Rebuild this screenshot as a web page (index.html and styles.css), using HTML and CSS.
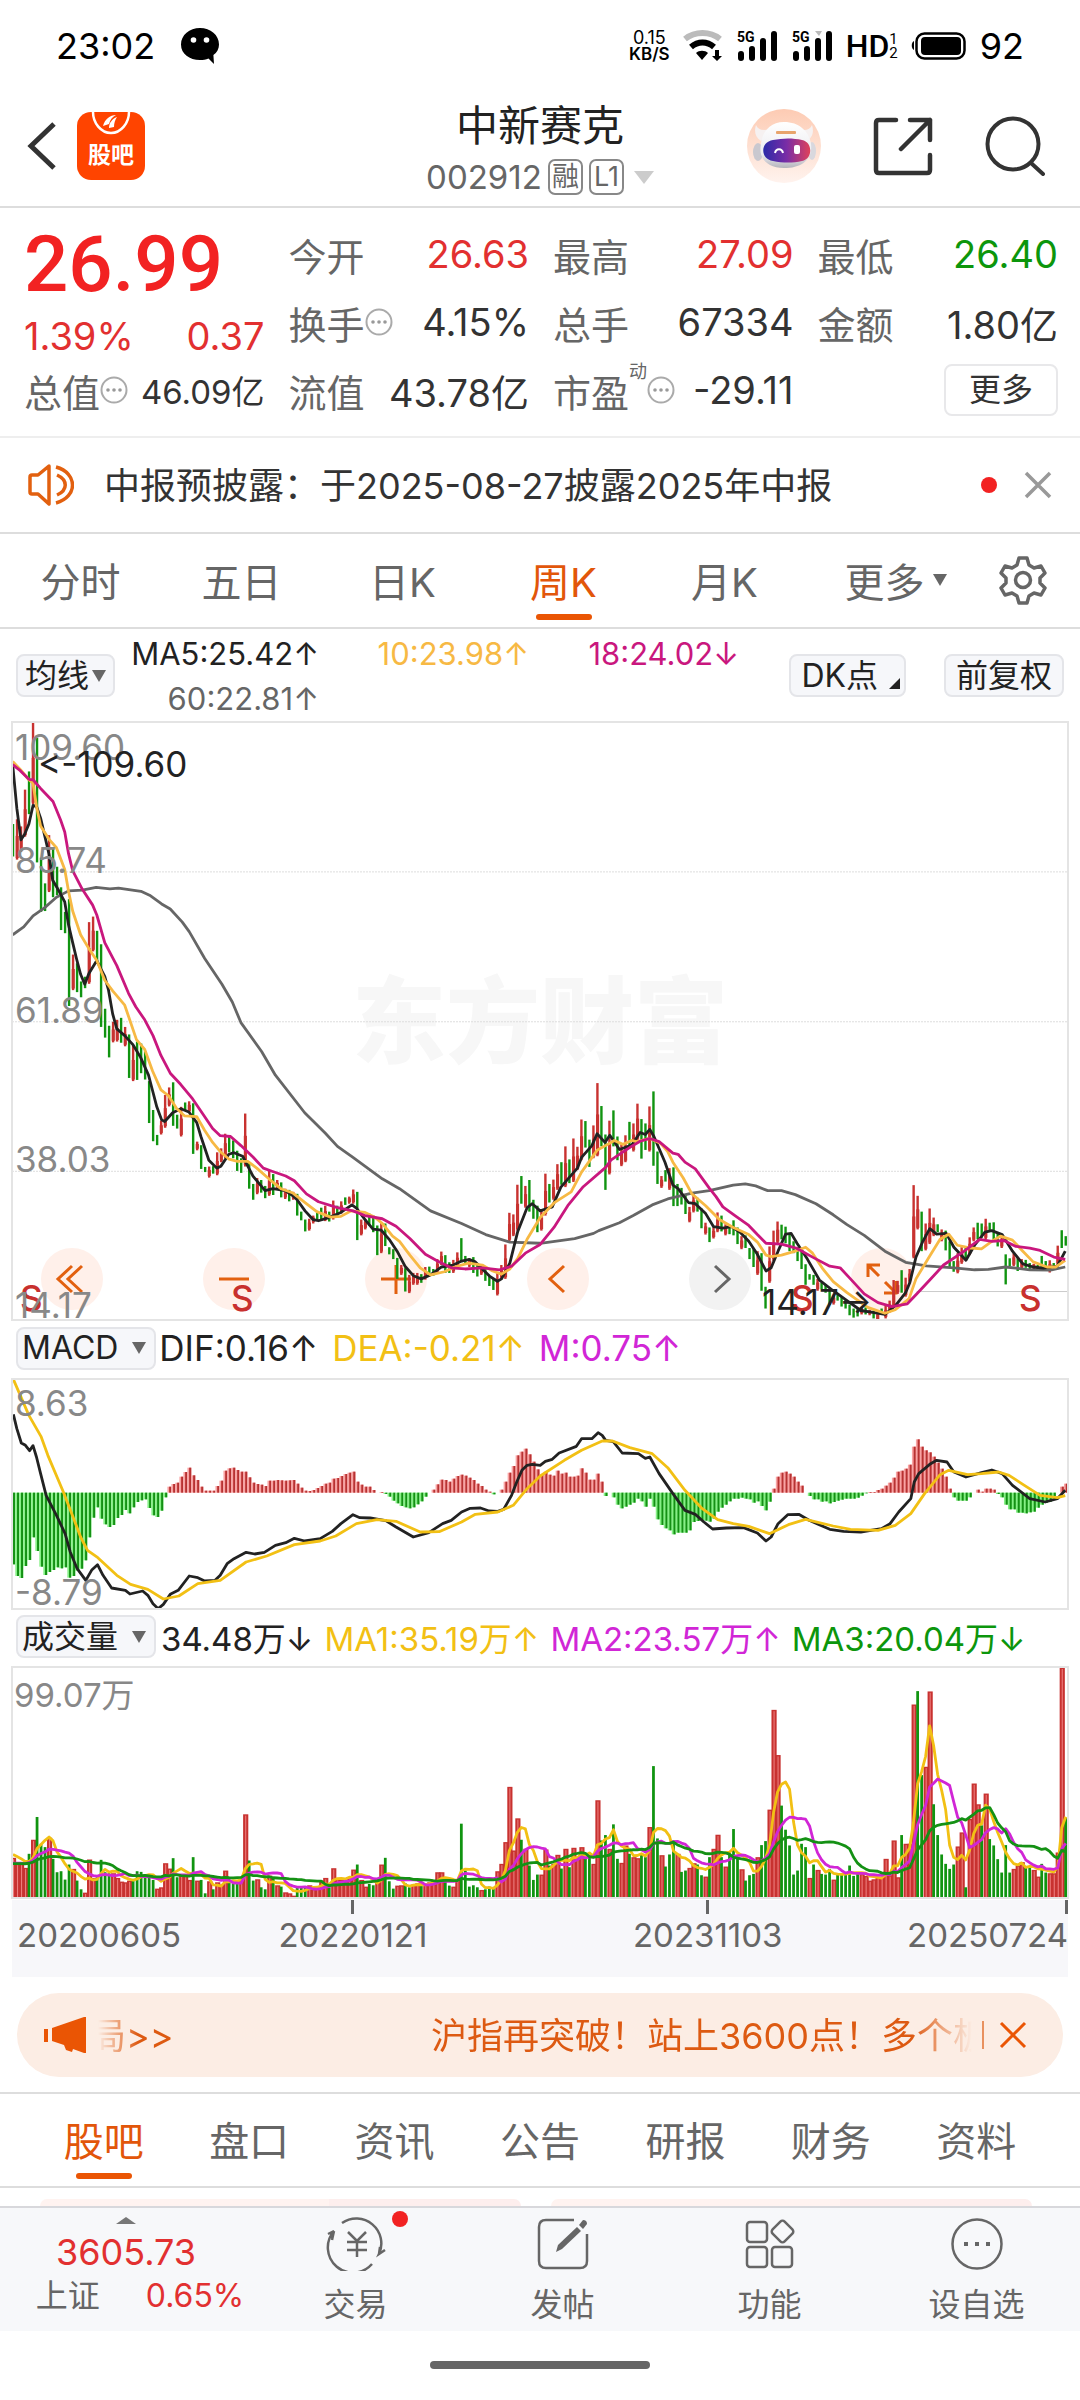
FILE: index.html
```html
<!DOCTYPE html>
<html lang="zh-CN">
<head>
  <meta charset="utf-8">
  <title>中新赛克 002912</title>
  <meta name="viewport" content="width=device-width, initial-scale=1">
  <link rel="stylesheet" href="styles.css">
</head>
<body>
  <div class="status">
    <span class="clock">23:02</span>
    <svg class="chat" width="38" height="36" viewBox="0 0 38 36"><path d="M19 0C8.500 0 0 7 0 16.500S8.500 32 19 32c3 0 6-.6 8.500-1.600L33 36l-.6-9C36 24.500 38 20.800 38 16.500 38 7 29.500 0 19 0z"/><circle cx="12.500" cy="12" r="2.800" fill="#fff"/><circle cx="25.500" cy="12" r="2.800" fill="#fff"/></svg>
    <div class="status-right">
      <span class="speed"><span>0.15</span><b>KB/S</b></span>
      <svg width="40" height="32" viewBox="0 0 40 32"><path d="M2 9C12 1 27 1 37 9" fill="none" stroke="#bbb" stroke-width="6"/><path d="M8 17c7-6 16-6 23 0" fill="none" stroke="#000" stroke-width="6"/><path d="M13 23c3-3 9-3 12 0l-6 7z"/><path d="M32 20h4v6h3l-5 5-5-5h3z"/></svg>
      <svg class="signal" width="42" height="32" viewBox="0 0 42 32"><path d="M5 24v4M16 19v9M27 11v17M38 4v24" stroke="#000" stroke-width="6" stroke-linecap="round"/><text x="1" y="12">5G</text></svg>
      <svg class="signal" width="42" height="32" viewBox="0 0 42 32"><path d="M5 24v4M16 19v9M27 11v17M38 4v24" stroke="#000" stroke-width="6" stroke-linecap="round"/><path d="M24 1h7l-3 5z" fill="#bbb"/><text x="1" y="12">5G</text></svg>
      <span class="hd">HD<span class="sim"><i>1</i><i>2</i></span></span>
      <svg width="56" height="30" viewBox="0 0 56 30"><rect x="5.500" y="2.500" width="48" height="25" rx="8" fill="none" stroke="#000" stroke-width="2.500"/><rect x="10" y="6" width="40" height="18" rx="4"/><path d="M3 10v9c-3-1-3-8 0-9z"/></svg>
      <span class="clock">92</span>
    </div>
  </div>

  <header class="header">
    <div class="header-left">
      <button class="icon" aria-label="返回"><svg width="30" height="50" viewBox="0 0 30 50"><path d="M27 3L4 25l23 22" fill="none" stroke="#333" stroke-width="5"/></svg></button>
      <a class="logo" href="#"><svg class="logo-mark" width="44" height="24" viewBox="0 0 44 24"><path d="M4 0c0 11 8 21 18 21S40 11 40 0" fill="none" stroke="#fff" stroke-width="2.500"/><path d="M14 14C16 7 21 3 27 3c-4 2-6 5-7 9zM20 16c0-5 3-9 8-11-2 3-3 6-3 10z" fill="#fff"/></svg><span>股吧</span></a>
    </div>
    <div class="title">
      <h1>中新赛克</h1>
      <p>002912<span class="badge">融</span><span class="badge">L1</span><i class="down"></i></p>
    </div>
    <div class="header-right">
      <button class="icon" aria-label="助手"><svg width="74" height="74" viewBox="0 0 74 74">
        <defs>
          <linearGradient id="peach" x1="0" y1="0" x2="0" y2="1"><stop offset="0" stop-color="#fdcbb3"/><stop offset="1" stop-color="#fff3ee"/></linearGradient>
          <linearGradient id="visor"><stop offset="0" stop-color="#2b2aa8"/><stop offset=".5" stop-color="#7a2da6"/><stop offset="1" stop-color="#e0435a"/></linearGradient>
          <linearGradient id="shell" x1="0" y1="0" x2="0" y2="1"><stop offset="0" stop-color="#fff"/><stop offset=".7" stop-color="#ececf0"/><stop offset="1" stop-color="#b5b4bc"/></linearGradient>
        </defs>
        <circle cx="37" cy="37" r="37" fill="url(#peach)"/>
        <path d="M9 16c-2 6-1 12 5 16l9-12c-7 2-12 1-14-4zM65 16c2 6 1 12-5 16l-9-12c7 2 12 1 14-4z" fill="#f6f1f1"/>
        <ellipse cx="11" cy="43" rx="5" ry="9" fill="#c9c8cf"/><ellipse cx="65" cy="42" rx="4" ry="9" fill="#d9d8de"/>
        <path d="M37 13c-14 0-22 10-23 22-3 14 6 24 23 24s29-8 27-24C62 22 52 13 37 13z" fill="url(#shell)"/>
        <rect x="29" y="22" width="20" height="3" rx="1" fill="#e8a46c"/>
        <path d="M26 31c10-2 20-2 29 0 11 2 11 19 0 21-9 2-19 2-29 0-13-2-13-19 0-21z" fill="url(#visor)"/>
        <path d="M28 44c1-5 7-5 8 0" fill="none" stroke="#fff" stroke-width="2"/><rect x="47" y="36" width="6" height="9" rx="2" fill="#fff"/>
      </svg></button>
      <button class="icon" aria-label="分享"><svg width="60" height="60" viewBox="0 0 60 60" fill="none" stroke="#333" stroke-width="4.500" stroke-linecap="round" stroke-linejoin="round"><path d="M23 4H6q-3 0-3 3v47q0 3 3 3h48q3 0 3-3V39M37 4h20v20M57 4L28 33"/></svg></button>
      <button class="icon" aria-label="搜索"><svg width="60" height="60" viewBox="0 0 60 60" fill="none" stroke="#333" stroke-width="4" stroke-linecap="round"><circle cx="28" cy="28" r="25.500"/><path d="M46 47l12 11"/></svg></button>
    </div>
  </header>

  <section class="quote">
    <div class="price">
      <strong>26.99</strong>
      <p><span>1.39%</span><span>0.37</span></p>
    </div>
    <p class="stat"><span>今开</span><b class="up">26.63</b></p>
    <p class="stat"><span>最高</span><b class="up">27.09</b></p>
    <p class="stat"><span>最低</span><b class="dn">26.40</b></p>
    <p class="stat"><span>换手<svg class="tip" viewBox="0 0 28 28"><use href="#dots"/></svg></span><b>4.15%</b></p>
    <p class="stat"><span>总手</span><b>67334</b></p>
    <p class="stat"><span>金额</span><b>1.80亿</b></p>
    <p class="stat"><span>总值<svg class="tip" viewBox="0 0 28 28"><use href="#dots"/></svg></span><b class="small">46.09亿</b></p>
    <p class="stat"><span>流值</span><b>43.78亿</b></p>
    <p class="stat"><span>市盈<sup>动</sup><svg class="tip" viewBox="0 0 28 28"><use href="#dots"/></svg></span><b>-29.11</b></p>
    <div class="more"><button>更多</button></div>
  </section>
  <svg class="sprite">
    <symbol id="dots" viewBox="0 0 28 28"><circle cx="14" cy="14" r="12.500" fill="none" stroke="#aaa" stroke-width="2"/><circle cx="8" cy="14" r="1.800" fill="#999"/><circle cx="14" cy="14" r="1.800" fill="#999"/><circle cx="20" cy="14" r="1.800" fill="#999"/></symbol>
  </svg>

  <section class="notice">
    <svg width="46" height="42" viewBox="0 0 46 42" fill="none" stroke="#e2600f" stroke-width="3.500" stroke-linejoin="round"><path d="M21 2L10 11H4q-2 0-2 2v15q0 2 2 2h6l11 10zM28 3c22 6 22 30 0 36M29 11c11 5 11 15 0 20"/></svg>
    <a href="#">中报预披露：于2025-08-27披露2025年中报</a>
    <i class="dot"></i>
    <button class="icon" aria-label="关闭"><svg width="28" height="28" viewBox="0 0 28 28"><path d="M2 2l24 24M26 2L2 26" stroke="#999" stroke-width="3.500"/></svg></button>
  </section>

  <nav class="periods">
    <button>分时</button>
    <button>五日</button>
    <button>日K</button>
    <button class="active">周K</button>
    <button>月K</button>
    <button class="period-more">更多<i class="caret"></i></button>
    <button aria-label="设置"><svg width="50" height="50" viewBox="0 0 50 50" fill="none" stroke="#666" stroke-width="3.500" stroke-linejoin="round"><path d="M21 3h8l2 7 5 3 7-2 4 7-5 5v5l5 5-4 7-7-2-5 3-2 7h-8l-2-7-5-3-7 2-4-7 5-5v-5l-5-5 4-7 7 2 5-3z"/><circle cx="25" cy="25" r="7.500"/></svg></button>
  </nav>

  <section class="ma">
    <button class="chip">均线<i class="caret"></i></button>
    <div class="ma-values">
      <span class="c-black">MA5:25.42↑</span><span class="c-amber">10:23.98↑</span><span class="c-pink">18:24.02↓</span>
      <span class="c-grey">60:22.81↑</span>
    </div>
    <button class="chip chip-dk">DK点<i class="corner"></i></button>
    <button class="chip">前复权</button>
  </section>

  <section class="chart kline">
    <div class="watermark">东方财富</div>
    <div class="controls">
      <button aria-label="最早"><svg width="62" height="62" viewBox="0 0 62 62"><path d="M31 18L17 31l14 13M41 18L27 31l14 13"/></svg></button>
      <button aria-label="缩小"><svg width="62" height="62" viewBox="0 0 62 62"><path d="M16 31h30"/></svg></button>
      <button aria-label="放大"><svg width="62" height="62" viewBox="0 0 62 62"><path d="M16 31h30M31 17v29"/></svg></button>
      <button aria-label="向左"><svg width="62" height="62" viewBox="0 0 62 62"><path d="M37 18L23 31l14 13"/></svg></button>
      <button class="off" aria-label="向右"><svg width="62" height="62" viewBox="0 0 62 62"><path d="M26 18l14 13-14 13"/></svg></button>
      <button aria-label="全屏"><svg width="62" height="62" viewBox="0 0 62 62"><path d="M17 29V17h12M17 17l11 11M34 34l11 11M33 45h12V33"/></svg></button>
    </div>
    <svg class="plot" id="kline" viewBox="36 32 3063 1512" preserveAspectRatio="none"></svg>
    <span class="axis p1">109.60</span>
    <span class="axis p2">85.74</span>
    <span class="axis p3">61.89</span>
    <span class="axis p4">38.03</span>
    <span class="mark s1">S</span>
    <span class="mark s2">S</span>
    <span class="mark s3">S</span>
    <span class="mark s4">S</span>
    <span class="axis p5">14.17</span>
    <span class="peak high">&lt;-109.60</span>
    <span class="peak low">14.17→</span>
  </section>

  <div class="legend">
    <button class="chip">MACD<i class="caret"></i></button>
    <span class="c-black">DIF:0.16↑</span>
    <span class="c-yellow">DEA:-0.21↑</span>
    <span class="c-magenta">M:0.75↑</span>
  </div>
  <section class="chart macd">
    <svg class="plot" id="macd" viewBox="36 146 3063 690" preserveAspectRatio="none"></svg>
    <span class="axis m1">8.63</span>
    <span class="axis m2">-8.79</span>
  </section>

  <div class="legend legend-vol">
    <button class="chip">成交量<i class="caret"></i></button>
    <span class="c-black">34.48万↓</span>
    <span class="c-yellow">MA1:35.19万↑</span>
    <span class="c-magenta">MA2:23.57万↑</span>
    <span class="c-green">MA3:20.04万↓</span>
  </div>
  <section class="chart volume">
    <svg class="plot" id="volume" viewBox="36 50 3063 690" preserveAspectRatio="none"></svg>
    <span class="axis v1">99.07万</span>
  </section>
  <div class="dates"><span>20200605</span><span>20220121</span><span>20231103</span><span>20250724</span></div>

  <section class="banner">
    <svg width="42" height="36" viewBox="0 0 42 36" fill="#ea5504"><path d="M0 12h4v13H0zM8 11L40 0h2v36h-2l-11-4-1 3-6-2-2-5-12-4z"/></svg>
    <p class="marquee"><span>局&gt;&gt;</span><a href="#">沪指再突破！站上3600点！多个板块</a></p>
    <button class="icon" aria-label="关闭"><svg width="28" height="28" viewBox="0 0 28 28"><path d="M2 2l24 24M26 2L2 26" stroke="#ea5504" stroke-width="3"/></svg></button>
  </section>

  <nav class="sections">
    <a class="active" href="#">股吧</a>
    <a href="#">盘口</a>
    <a href="#">资讯</a>
    <a href="#">公告</a>
    <a href="#">研报</a>
    <a href="#">财务</a>
    <a href="#">资料</a>
  </nav>
  <div class="cards"><div></div><div></div></div>

  <nav class="tabbar">
    <a class="index" href="#">
      <i class="tri-up"></i>
      <b>3605.73</b>
      <span class="index-row"><span>上证</span><em>0.65%</em></span>
    </a>
    <a href="#"><svg width="62" height="54" viewBox="0 0 62 54" fill="none" stroke="#666" stroke-width="2.500"><path d="M17 6A25 25 0 0 1 54 37l6-4M47 47A25 25 0 0 1 9 14l-6 3M54 37l1-7M9 14l-2 9M23 15l9 9 9-9M22 25h20M22 33h20M32 24v16"/></svg><i class="dot"></i>交易</a>
    <a href="#"><svg width="54" height="54" viewBox="0 0 54 54" fill="none" stroke="#666" stroke-width="2.500"><path d="M38 3H10q-7 0-7 7v34q0 7 7 7h34q7 0 7-7V17"/><path d="M20 35l2-7L41 10l4 4-19 18z" fill="#666" stroke="none"/><path d="M43 8l4-5q4 0 4 4l-4 5z" fill="#666" stroke="none"/></svg>发帖</a>
    <a href="#"><svg width="54" height="54" viewBox="0 0 54 54" fill="none" stroke="#666" stroke-width="2.500"><rect x="4" y="5" width="20" height="20" rx="3"/><rect x="4" y="30" width="20" height="20" rx="3"/><rect x="29" y="30" width="20" height="20" rx="3"/><rect x="31" y="6" width="17" height="17" rx="3" transform="rotate(45 39.500 14.500)"/></svg>功能</a>
    <a href="#"><svg width="54" height="54" viewBox="0 0 54 54" fill="none" stroke="#666" stroke-width="2.500"><circle cx="27" cy="27" r="24.500"/><path d="M14 27h4M25 27h4M36 27h4" stroke-width="4"/></svg>设自选</a>
  </nav>
  <div class="home"><i></i></div>
  <script src="chart.js"></script>
</body>
</html>
```
FILE: styles.css
```css
* {
  box-sizing: border-box;
}
body {
  margin: 0;
  background: #fff;
  color: #333;
  font-family: Inter, "Noto Sans CJK SC", sans-serif;
  font-size: 38px;
}
h1, p {
  margin: 0;
  font-weight: 400;
}
b, i, em {
  font-weight: 400;
  font-style: normal;
}
a {
  color: inherit;
  text-decoration: none;
}
button {
  border: 0;
  padding: 0;
  background: none;
  color: inherit;
  font: inherit;
}
svg {
  display: block;
  flex: none;
}
.sprite {
  display: none;
}
.up { color: #e23030; }
.dn { color: #0c960c; }
.c-black { color: #222; }
.c-amber { color: #f7b944; }
.c-pink { color: #c9177e; }
.c-grey { color: #666; }
.c-yellow { color: #f2c014; }
.c-magenta { color: #d126d6; }
.c-green { color: #0c960c; }

/* status bar */
.status {
  display: flex;
  align-items: center;
  height: 92px;
  padding: 0 56px;
  color: #000;
}
.clock {
  font-size: 36px;
}
.chat {
  margin-left: 26px;
}
.status-right {
  display: flex;
  align-items: center;
  gap: 13px;
  margin-left: auto;
}
.speed {
  display: flex;
  flex-direction: column;
  align-items: center;
  font-size: 18px;
  line-height: 16px;
}
.speed b {
  font-size: 17px;
  font-weight: 600;
}
.signal text {
  font: 700 14px Roboto, sans-serif;
}
.hd {
  display: flex;
  align-items: center;
  font: 500 32px Roboto, sans-serif;
}
.sim {
  display: flex;
  flex-direction: column;
  font-size: 15px;
  font-weight: 700;
  line-height: 14px;
}

/* header */
.header {
  display: grid;
  grid-template-columns: 1fr auto 1fr;
  align-items: center;
  height: 116px;
  padding: 0 35px 0 27px;
  border-bottom: 2px solid #ddd;
}
.header-left, .header-right {
  display: flex;
  align-items: center;
  padding-bottom: 6px;
}
.header-left {
  gap: 20px;
}
.header-right {
  gap: 52px;
  justify-content: flex-end;
}
.icon {
  display: flex;
}
.logo {
  display: flex;
  flex-direction: column;
  align-items: center;
  width: 68px;
  height: 68px;
  border-radius: 14px;
  background: #ff4400;
  color: #fff;
  font-size: 23px;
  font-weight: 700;
  line-height: 38px;
}
.title {
  padding-left: 8px;
  text-align: center;
  color: #666;
  font-size: 33px;
}
.title h1 {
  color: #222;
  font-size: 42px;
  line-height: 56px;
}
.title p {
  display: flex;
  align-items: center;
  gap: 6px;
  line-height: 46px;
}
.badge {
  border: 2px solid #888;
  border-radius: 7px;
  min-width: 35px;
  height: 36px;
  font-size: 27px;
  line-height: 32px;
}
.down {
  margin-left: 4px;
  border: 10px solid transparent;
  border-top: 13px solid #ccc;
  border-bottom: 0;
}

/* quote */
.quote {
  display: grid;
  grid-template-columns: repeat(4, 1fr);
  grid-template-rows: repeat(3, 68px);
  column-gap: 24px;
  padding: 12px 22px 12px 24px;
  border-bottom: 2px solid #eee;
}
.price {
  grid-row: span 2;
  color: #f22222;
}
.price strong {
  display: block;
  font: 500 78px/90px Roboto, sans-serif;
}
.price p {
  display: flex;
  justify-content: space-between;
  line-height: 52px;
  color: #e23030;
}
.stat {
  display: flex;
  align-items: center;
  justify-content: space-between;
}
.stat span {
  display: flex;
  align-items: center;
  color: #666;
}
.stat .small {
  font-size: 33px;
}
.stat sup {
  align-self: flex-start;
  font-size: 18px;
  line-height: 18px;
}
.tip {
  width: 28px;
  height: 28px;
}
.more {
  display: flex;
  align-items: center;
  justify-content: flex-end;
}
.more button {
  width: 114px;
  height: 52px;
  border: 2px solid #e8e8ea;
  border-radius: 8px;
  font-size: 32px;
  line-height: 46px;
}

/* notice */
.notice {
  display: flex;
  align-items: center;
  height: 96px;
  padding: 0 28px;
  border-bottom: 2px solid #ddd;
}
.notice a {
  flex: 1;
  margin-left: 30px;
  padding-bottom: 4px;
  font-size: 36px;
}
.dot {
  width: 16px;
  height: 16px;
  border-radius: 50%;
  background: #f22222;
}
.notice .icon {
  margin-left: 27px;
}

/* period tabs */
.periods {
  display: grid;
  grid-template-columns: repeat(6, 161fr) 114fr;
  height: 95px;
  border-bottom: 2px solid #ddd;
  color: #666;
  font-size: 40px;
}
.periods button {
  position: relative;
  display: flex;
  align-items: center;
  justify-content: center;
  padding-bottom: 2px;
}
.periods .period-more {
  padding-left: 20px;
}
.periods .active, .sections .active {
  color: #e2560a;
}
.active::after {
  content: "";
  position: absolute;
  left: calc(50% - 28px);
  bottom: 7px;
  width: 56px;
  height: 6px;
  border-radius: 3px;
  background: #ea5504;
}
.caret {
  display: inline-block;
  margin-left: 8px;
  border: 7px solid transparent;
  border-top: 12px solid #666;
  border-bottom: 0;
}

/* moving averages */
.ma {
  display: flex;
  align-items: center;
  height: 93px;
  padding: 0 16px;
}
.chip {
  display: flex;
  align-items: center;
  justify-content: center;
  height: 43px;
  padding: 0 10px;
  border: 2px solid #e4e5e9;
  border-radius: 8px;
  background: #f6f7fa;
  color: #222;
  font-size: 32px;
  line-height: 36px;
  white-space: nowrap;
}
.ma .chip:first-child {
  padding: 0 7px;
}
.ma .caret {
  margin-left: 3px;
}
.ma-values {
  display: grid;
  grid-template-columns: repeat(3, 200px);
  column-gap: 10px;
  margin-left: 4px;
  margin-right: auto;
  text-align: right;
  font-size: 31px;
  line-height: 45px;
}
.chip-dk {
  margin-right: 38px;
  padding-right: 4px;
}
.corner {
  align-self: flex-end;
  margin: 0 0 6px 11px;
  border-left: 11px solid transparent;
  border-bottom: 11px solid #222;
}

/* charts */
.chart {
  position: relative;
  margin: 0 12px;
}
.kline { height: 598px; }
.macd { height: 230px; }
.volume { height: 231px; }
.plot {
  position: absolute;
  inset: 0;
  width: 100%;
  height: 100%;
  outline: 2px solid #e4e4e4;
  outline-offset: -1px;
  pointer-events: none;
}
.plot * {
  vector-effect: non-scaling-stroke;
}
.watermark {
  position: absolute;
  top: 225px;
  left: 0;
  right: 0;
  text-align: center;
  color: #f7f7f7;
  font-size: 94px;
  font-weight: 900;
  line-height: 150px;
}
.controls {
  position: absolute;
  left: 29px;
  right: 155px;
  top: 526px;
  display: flex;
  justify-content: space-between;
}
.controls button {
  border-radius: 50%;
  background: #fff0ea;
}
.controls path {
  fill: none;
  stroke: #e2600f;
  stroke-width: 3;
}
.controls .off {
  background: #f2f2f2;
}
.controls .off path {
  stroke: #666;
}
.axis, .mark, .peak {
  position: absolute;
  left: 3px;
  line-height: 40px;
}
.axis {
  color: #888;
  font-size: 35px;
}
.p1 { top: 5px; }
.p2 { top: 118px; }
.p3 { top: 268px; }
.p4 { top: 417px; }
.p5 { top: 563px; }
.m1 { top: 4px; }
.m2 { top: 193px; }
.v1 { top: 8px; left: 2px; font-size: 33px; }
.mark {
  top: 556px;
  color: #c8302e;
  font-size: 35px;
  font-weight: 500;
}
.s1 { left: 8px; }
.s2 { left: 219px; }
.s3 { left: 779px; }
.s4 { left: 1007px; }
.peak {
  color: #222;
  font-size: 35px;
}
.high { top: 22px; left: 26px; }
.low { top: 560px; left: 750px; }
.legend {
  display: flex;
  align-items: center;
  gap: 14px;
  height: 59px;
  padding: 0 16px 3px;
  font-size: 35px;
  white-space: nowrap;
}
.legend .chip {
  padding: 0 8px 0 4px;
  margin-right: -11px;
}
.legend .caret {
  margin-left: 14px;
}
.legend-vol {
  gap: 11px;
  height: 58px;
  font-size: 33px;
}
.legend-vol .chip {
  margin-right: -6px;
}
.dates {
  display: grid;
  grid-template-columns: 186fr 312fr 400fr 156fr;
  height: 79px;
  margin: 0 12px;
  border-top: 2px solid #fff;
  background: #f7f7fa;
  color: #666;
  font-size: 33px;
  line-height: 42px;
  text-align: center;
}
.dates span::before {
  content: "";
  display: block;
  width: 3px;
  height: 14px;
  margin: 0 auto;
  background: #666;
}
.dates span:first-child {
  padding-left: 5px;
  text-align: left;
}
.dates span:first-child::before {
  background: none;
}
.dates span:last-child {
  display: flex;
  flex-direction: column;
  align-items: flex-end;
}
.dates span:last-child::before {
  margin: 0;
}

/* banner */
.banner {
  display: flex;
  align-items: center;
  height: 84px;
  margin: 16px 17px 15px;
  padding: 0 36px 0 27px;
  border-radius: 42px;
  background: #fcede4;
  color: #dd5a12;
  font-size: 36px;
}
.marquee {
  display: flex;
  flex: 1;
  overflow: hidden;
  margin: 0 10px 4px 12px;
  white-space: nowrap;
  -webkit-mask: linear-gradient(90deg, transparent, #000 40px, #000 calc(100% - 60px), transparent);
  mask: linear-gradient(90deg, transparent, #000 40px, #000 calc(100% - 60px), transparent);
}
.marquee span {
  flex: none;
  width: 341px;
  margin-left: -8px;
}
.banner .icon {
  padding-left: 15px;
  border-left: 2px solid #e8915f;
}

/* section tabs */
.sections {
  display: grid;
  grid-template-columns: repeat(7, 1fr);
  height: 96px;
  padding: 0 31px;
  border-top: 2px solid #ddd;
  border-bottom: 2px solid #ddd;
  color: #666;
  font-size: 40px;
}
.sections a {
  position: relative;
  display: flex;
  align-items: center;
  justify-content: center;
  padding-bottom: 2px;
}
.cards {
  display: flex;
  gap: 30px;
  padding: 11px 48px 0 40px;
}
.cards div {
  flex: 1;
  height: 7px;
  border-radius: 16px 16px 0 0;
  background: linear-gradient(90deg, #fff3f0 60%, #fdeeed 60%);
}

/* bottom bar */
.tabbar {
  display: grid;
  grid-template-columns: 252fr repeat(4, 207fr);
  height: 125px;
  border-top: 2px solid #d8d8dc;
  background: #f7f8fa;
  color: #666;
  font-size: 32px;
}
.tabbar a {
  position: relative;
  display: flex;
  flex-direction: column;
  align-items: center;
  padding-top: 9px;
  line-height: 68px;
}
.tabbar .dot {
  position: absolute;
  left: 62%;
  margin-left: 12px;
  top: 3px;
}
.tabbar .index {
  line-height: 44px;
}
.index b {
  color: #e23030;
  font-size: 36px;
}
.index-row {
  display: flex;
  gap: 46px;
  padding-left: 28px;
}
.index-row em {
  color: #e23030;
}
.tri-up {
  border: 10px solid transparent;
  border-bottom: 7px solid #777;
  border-top: 0;
  margin-bottom: 6px;
}
.home {
  display: flex;
  justify-content: center;
  height: 69px;
  padding-top: 30px;
}
.home i {
  width: 220px;
  height: 8px;
  border-radius: 4px;
  background: #666;
}
```
FILE: chart.js
```js
var NS = 'http://www.w3.org/2000/svg';
var STEP = 11.61;   // distance between two weeks
var HALF = 1568;    // lines are stored in two halves

function add(svg, tag, attrs) {
  var el = document.createElementNS(NS, tag);
  for (var k in attrs) el.setAttribute(k, attrs[k]);
  svg.appendChild(el);
}
function xAt(i) {
  return 39 + i * STEP;
}
function line(svg, color, left, right) {
  var pts = left.trim().split(/\s+/);
  (right || '').trim().split(/\s+/).forEach(function (p) {
    if (!p) return;
    var xy = p.split(',');
    pts.push((+xy[0] + HALF) + ',' + xy[1]);
  });
  add(svg, 'polyline', { points: pts.join(' '), fill: 'none', stroke: color, 'stroke-width': 2.8, 'stroke-linejoin': 'round' });
}

// ---- K line: colour, high, low
var candles = 'g290-372 r278-380 r296-360 r203-322 g157-265 r34-240 g72-387 g375-512 g440-510 r318-462 g350-475 g398-470 g450-558 g512-566 g480-750 r620-710 g642-715 g688-728 g676-705 r538-694 r524-612 g560-640 g594-803 g757-830 g800-880 r790-842 r785-840 g780-843 r803-852 g822-932 r850-940 g840-937 g845-920 g865-936 g940-1046 g1013-1092 g1076-1102 r1040-1075 r975-1058 r956-1004 g943-1053 g1025-1060 r1005-1080 g994-1015 r991-1020 g996-1124 r1093-1115 g1102-1162 g1157-1170 r1156-1184 g1155-1174 r1120-1178 r1110-1145 r1073-1135 g1080-1120 g1090-1135 g1116-1167 g1135-1172 r1022-1156 g1145-1212 g1200-1240 r1185-1226 g1190-1222 g1205-1236 r1165-1230 g1175-1228 r1190-1215 g1196-1234 r1212-1238 g1215-1244 r1220-1240 g1225-1280 g1270-1292 g1290-1320 r1288-1318 r1280-1300 g1272-1290 g1260-1290 r1255-1294 g1270-1295 r1242-1290 g1255-1285 r1244-1275 g1234-1253 r1232-1250 r1214-1250 g1220-1342 r1290-1330 r1288-1315 g1275-1305 g1280-1322 g1305-1380 r1296-1375 g1300-1357 g1360-1378 g1365-1390 g1387-1440 r1405-1430 g1413-1472 r1430-1476 r1425-1455 r1425-1455 g1428-1450 r1410-1442 g1409-1430 g1415-1432 r1390-1425 r1371-1405 g1380-1425 g1398-1425 r1392-1425 r1373-1412 g1337-1398 g1382-1405 r1388-1410 g1385-1425 g1400-1434 r1405-1430 g1415-1445 g1432-1458 g1440-1468 r1425-1482 r1405-1440 r1353-1440 r1273-1345 r1277-1332 r1202-1318 g1180-1250 r1205-1260 g1190-1270 g1240-1288 g1255-1322 ' +
  'r1265-1318 r1174-1280 g1200-1247 r1189-1240 r1150-1215 g1145-1202 r1105-1208 g1138-1198 r1085-1195 r1106-1165 r1037-1140 g1041-1108 g1088-1157 r1052-1135 r945-1130 g1003-1105 g1075-1215 r1040-1176 g1014-1105 g1080-1140 r1100-1155 r1077-1145 g1043-1105 r1047-1118 r997-1090 g1036-1136 g1047-1114 r1004-1118 g966-1154 g1118-1200 r1180-1210 g1165-1194 r1160-1215 g1158-1256 g1200-1256 g1210-1252 g1228-1276 r1258-1297 r1224-1272 g1235-1270 g1262-1312 r1298-1328 g1310-1347 r1310-1338 r1272-1322 g1280-1320 r1302-1330 g1305-1327 g1292-1330 g1310-1352 r1332-1365 g1330-1362 g1362-1390 g1365-1410 r1370-1430 g1375-1470 g1460-1515 r1358-1450 r1318-1395 r1295-1350 g1303-1340 g1308-1350 g1325-1370 g1345-1375 g1360-1395 g1370-1415 g1403-1455 g1428-1442 g1430-1455 r1440-1470 g1450-1466 g1455-1475 g1470-1506 r1480-1505 g1478-1495 g1485-1510 g1492-1515 g1505-1532 g1515-1538 g1515-1535 r1512-1530 g1512-1530 r1518-1532 g1520-1540 r1522-1548 g1515-1530 r1508-1540 r1495-1525 r1443-1510 r1445-1478 g1418-1475 r1437-1485 r1415-1450 r1203-1388 r1230-1315 g1270-1370 r1300-1368 r1262-1352 r1285-1332 g1302-1322 r1315-1345 g1318-1368 g1345-1412 g1395-1422 r1375-1426 r1360-1402 g1362-1390 r1335-1380 r1310-1345 g1298-1340 g1300-1336 r1288-1340 g1298-1320 g1297-1345 g1325-1358 r1330-1362 g1378-1454 g1388-1408 r1375-1408 g1388-1420 r1390-1415 g1392-1412 g1400-1418 r1402-1416 g1405-1418 g1382-1410 g1395-1414 r1393-1424 g1400-1412 r1356-1405 g1317-1362 g1332-1356';

function drawKline() {
  var svg = document.getElementById('kline');
  [411, 790, 1168].forEach(function (y) {
    add(svg, 'line', { x1: 36, x2: 3099, y1: y, y2: y, stroke: '#ddd', 'stroke-width': 1, 'stroke-dasharray': '2 1' });
  });
  add(svg, 'line', { x1: 2660, x2: 3099, y1: 1472, y2: 1472, stroke: '#ccc', 'stroke-width': 1 });
  candles.split(' ').forEach(function (c, i) {
    var hl = c.slice(1).split('-');
    var red = c[0] == 'r';
    add(svg, 'line', { x1: xAt(i), x2: xAt(i), y1: hl[0], y2: hl[1], stroke: red ? '#c83230' : '#109410', 'stroke-width': 2.4 });
    if (red) {
      var h = (hl[1] - hl[0]) * 0.55;
      add(svg, 'rect', { x: xAt(i) - 4, y: hl[1] - h - 4, width: 9, height: h, fill: '#c83230' });
    }
  });
  line(svg, '#666', '38,570 70,550 97,522 130,502 165,475 200,459 240,457 280,450 320,454 345,452 410,460 435,470 470,492 495,505 530,538 550,562 595,630 645,695 675,740 700,792 760,865 800,925 885,1020 945,1072 980,1105 1025,1133 1110,1187 1160,1212 1250,1268 1340,1300 1410,1328 1480,1347 1568,1350',
    '100,1338 155,1325 170,1318 230,1298 270,1280 325,1253 370,1238 440,1223 490,1217 560,1203 595,1200 625,1205 660,1217 700,1217 740,1227 800,1250 850,1278 890,1303 940,1330 1000,1370 1060,1398 1120,1407 1200,1412 1260,1417 1300,1416 1350,1410 1420,1417 1480,1418 1523,1410');
  line(svg, '#222', '38,140 50,250 62,330 73,315 85,290 97,243 107,245 119,275 131,320 143,365 154,432 166,450 177,467 189,487 200,545 212,590 223,630 235,670 247,695 259,668 282,635 293,655 305,675 316,710 328,770 340,808 363,825 386,847 409,880 432,925 444,965 456,1005 470,1038 479,1042 502,1020 526,1010 549,1018 572,1045 584,1080 607,1140 630,1160 642,1155 665,1125 680,1121 705,1130 735,1180 770,1217 793,1212 828,1217 851,1230 863,1240 886,1268 909,1290 925,1293 955,1285 990,1272 1022,1253 1036,1262 1060,1290 1083,1314 1107,1317 1130,1340 1153,1370 1176,1408 1200,1432 1223,1440 1250,1430 1281,1410 1316,1405 1340,1395 1363,1391 1380,1397 1400,1415 1421,1433 1444,1446 1456,1440 1480,1400 1503,1320 1530,1260 1545,1250 1568,1268',
    '35,1258 60,1208 108,1160 120,1133 150,1103 165,1073 188,1095 202,1077 230,1113 265,1102 290,1070 305,1075 318,1062 330,1080 362,1145 385,1203 400,1212 430,1247 450,1250 480,1275 503,1308 530,1312 555,1308 580,1322 605,1345 630,1378 655,1420 670,1412 690,1370 712,1327 728,1325 745,1350 775,1390 810,1443 850,1470 890,1495 930,1520 960,1524 1000,1530 1030,1508 1060,1475 1072,1450 1090,1385 1110,1345 1130,1313 1150,1327 1178,1325 1200,1360 1235,1393 1260,1355 1290,1322 1310,1318 1340,1328 1370,1370 1400,1402 1430,1410 1460,1413 1500,1408 1523,1370');
  line(svg, '#f7b944', '38,132 60,152 85,178 97,187 107,245 119,295 143,328 165,350 189,405 200,460 212,510 235,570 259,605 282,635 305,685 328,712 363,748 397,835 421,860 444,915 468,962 490,977 514,1010 537,1028 572,1030 595,1065 618,1095 642,1120 665,1137 690,1143 720,1143 746,1160 781,1187 816,1212 851,1223 886,1247 920,1270 960,1284 990,1282 1020,1268 1060,1272 1090,1285 1110,1300 1140,1332 1160,1345 1190,1380 1220,1412 1250,1430 1290,1422 1320,1410 1360,1400 1400,1405 1430,1420 1456,1428 1480,1415 1503,1388 1530,1340 1568,1285',
    '40,1248 90,1220 120,1170 165,1115 200,1098 215,1090 240,1100 265,1090 280,1093 318,1085 350,1098 370,1118 385,1145 415,1185 440,1225 480,1255 520,1290 560,1310 605,1328 630,1347 655,1380 670,1384 700,1380 740,1370 770,1360 790,1375 820,1415 850,1447 890,1475 950,1512 1000,1527 1030,1518 1070,1490 1090,1440 1130,1382 1160,1340 1185,1327 1210,1355 1250,1362 1280,1364 1310,1345 1335,1332 1370,1342 1400,1370 1430,1397 1470,1410 1495,1410 1523,1393');
  line(svg, '#c9177e', '38,140 60,155 85,177 97,178 119,200 155,233 177,280 189,310 200,365 212,408 240,455 270,495 282,520 305,590 340,648 374,718 395,752 421,785 445,825 468,875 495,920 525,948 560,985 595,1030 618,1060 640,1078 670,1080 700,1103 735,1132 765,1160 790,1168 830,1180 855,1192 890,1225 925,1245 980,1260 1025,1268 1060,1280 1110,1288 1150,1307 1190,1338 1235,1378 1270,1395 1310,1412 1350,1415 1400,1412 1450,1417 1485,1408 1525,1375 1568,1353',
    '40,1310 80,1255 125,1207 190,1158 205,1140 235,1122 265,1105 290,1092 318,1085 345,1093 385,1122 400,1125 420,1145 450,1162 490,1210 510,1232 530,1258 565,1280 605,1305 630,1328 655,1350 700,1352 745,1363 790,1385 840,1408 870,1412 900,1440 940,1478 980,1500 1020,1510 1065,1503 1090,1480 1130,1443 1170,1405 1230,1370 1275,1340 1310,1345 1345,1343 1380,1358 1420,1362 1450,1368 1490,1385 1523,1391');
}

// ---- MACD
var hist = [-215,-250,-256,-220,-202,-134,-175,-222,-247,-238,-232,-224,-227,-224,-255,-250,-235,-228,-203,-134,-75,-44,-78,-95,-103,-97,-76,-67,-52,-62,-44,-28,-23,-20,-46,-68,-73,-54,-14,18,26,30,48,62,75,52,38,18,6,6,6,20,36,66,73,75,68,63,63,46,30,26,24,20,36,36,38,37,36,37,38,27,15,6,5,8,14,20,27,30,42,44,50,56,60,63,33,24,18,18,8,0,2,-4,-12,-24,-32,-40,-44,-47,-44,-35,-26,-12,0,9,25,39,38,33,42,50,54,51,45,38,27,20,9,3,-5,0,9,33,60,80,112,123,132,115,93,70,
  54,63,54,51,66,57,60,48,48,51,73,60,39,39,57,33,-10,0,-14,-36,-47,-42,-36,-30,-18,-26,-42,-18,-42,-80,-97,-107,-113,-125,-120,-120,-120,-113,-88,-85,-82,-84,-87,-78,-57,-45,-36,-26,-18,-18,-15,-18,-20,-30,-26,-40,-53,-27,12,48,60,63,57,48,33,21,0,-10,-20,-20,-27,-26,-32,-28,-24,-21,-18,-18,-18,-15,-9,-2,2,2,8,12,21,30,45,63,66,72,84,138,160,138,127,121,108,90,72,48,12,-14,-24,-24,-24,-14,0,9,3,12,12,9,-4,-14,-36,-50,-50,-60,-60,-62,-59,-57,-45,-36,-30,-27,-18,0,18,27];

function drawMacd() {
  var svg = document.getElementById('macd');
  hist.forEach(function (v, i) {
    var y = v > 0 ? 487 - v : 487;
    var x = xAt(i);
    add(svg, 'rect', { x: x - 5, y: y, width: STEP, height: Math.abs(v), fill: v > 0 ? '#f9a3a3' : '#86f086' });
    add(svg, 'rect', { x: x, y: y, width: 6, height: Math.abs(v), fill: v > 0 ? '#b83232' : '#149114' });
  });
  line(svg, '#222', '40,252 50,295 63,338 75,345 87,361 97,346 107,380 119,430 135,495 165,555 190,610 205,665 225,715 250,750 268,718 284,703 300,735 325,773 365,780 378,791 415,782 430,795 445,820 460,835 475,822 495,792 518,780 550,737 575,742 595,752 625,750 640,735 660,700 680,685 715,666 740,671 768,666 800,645 830,637 855,624 885,632 930,625 965,603 990,580 1025,553 1045,562 1075,563 1120,571 1150,590 1200,620 1245,607 1285,580 1310,570 1340,545 1365,534 1395,533 1420,542 1445,543 1462,537 1485,495 1500,455 1515,420 1530,405 1545,402 1568,405',
    '15,393 35,387 55,368 105,348 120,325 150,325 168,307 180,315 190,330 212,334 238,368 285,370 305,384 318,380 345,430 385,490 420,540 450,552 475,575 500,596 540,593 590,592 630,608 655,632 670,620 690,580 718,553 750,552 780,570 840,597 880,603 930,605 990,595 1015,580 1040,545 1075,505 1085,455 1098,430 1130,402 1150,390 1180,395 1200,425 1235,440 1280,427 1310,419 1340,430 1370,465 1420,505 1465,515 1500,505 1523,480');
  line(svg, '#f2c014', '40,147 60,195 85,255 120,318 140,375 185,485 215,565 235,620 255,660 285,682 340,735 380,762 430,777 475,806 520,797 575,760 640,750 715,695 775,677 855,643 930,632 975,617 1035,580 1095,568 1150,573 1220,605 1275,604 1340,575 1380,552 1445,545 1490,525 1530,475 1568,437',
    '70,390 120,360 180,332 210,332 260,352 325,370 370,412 420,480 470,535 515,568 560,580 605,588 665,610 720,583 770,567 850,587 900,597 980,600 1030,585 1075,550 1115,490 1160,433 1185,420 1240,433 1280,430 1330,425 1360,435 1400,462 1450,495 1500,502 1523,496');
}

// ---- volume
var volumes = 'r118 r100 r100 r88 g130 r172 g240 g160 g150 r178 g115 g75 g78 g53 g98 r85 g50 g24 r14 r113 r58 g60 g112 g75 g72 r72 r58 r47 r45 r50 g55 g78 g76 g65 g65 g52 r26 r30 r102 r86 g117 g60 r65 r65 r52 g120 r50 g52 g12 r48 g24 r45 r38 r80 g45 g42 g42 r50 r248 g110 g50 r54 g30 g24 r65 g60 r36 g32 r15 r12 r5 g28 g30 g30 r36 r25 r30 r50 r58 g30 r87 r55 r52 r50 r57 r83 g98 r52 r32 g40 g36 r52 r98 g118 g48 g26 r35 r36 g42 g30 r38 r42 g38 r40 r45 r48 r75 r75 g50 g35 r32 r55 g220 g80 g32 g36 g30 r22 g24 g32 g26 r78 r100 r165 r330 r140 r236 g172 r145 g95 g52 g68 ' +
  'r68 r143 g95 r100 r127 g86 r145 g90 r148 r120 r150 g120 g125 r100 r290 g170 g186 r145 g218 g115 r103 r155 g130 r120 r117 g130 g120 r210 g392 g176 r126 g92 g128 g170 r130 g76 g80 r88 r102 g98 g66 r62 g120 r145 r187 g120 r92 g130 g204 g120 r84 g50 g66 g70 r120 g156 g168 r262 r560 r425 g274 g202 g155 g68 g80 g160 g150 r58 g98 r82 g70 g68 g85 r53 g70 g68 g70 g95 g64 g70 r70 r64 r50 r54 r60 r60 r115 r66 r170 r60 g186 r160 r160 r576 g616 g365 r390 r615 g278 g186 g128 g100 g85 g98 r152 r194 g30 r234 r340 r278 g215 r310 g174 g155 g114 g74 g156 g74 r85 r95 r105 g88 g88 r82 r62 g100 g74 r72 r72 r134 r686 g238';

function average(values, n) {
  // weeks before the first one drawn
  var all = [];
  for (var k = 0; k < n; k++) all.push(n == 5 ? 130 : 100);
  all = all.concat(values);
  return values.map(function (v, i) {
    var sum = 0;
    for (var j = 1; j <= n; j++) sum += all[i + j];
    return xAt(i) + ',' + (738 - sum / n);
  }).join(' ');
}
function drawVolume() {
  var svg = document.getElementById('volume');
  var bars = volumes.split(' ');
  bars.forEach(function (b, i) {
    var h = +b.slice(1);
    var x = xAt(i);
    if (b[0] == 'r') {
      add(svg, 'rect', { x: x - 6, y: 738 - h, width: 15, height: h, fill: '#c83230' });
      add(svg, 'rect', { x: x, y: 742 - h, width: 3, height: Math.max(h - 4, 0), fill: '#ee8080' });
    } else {
      add(svg, 'rect', { x: x - 4, y: 738 - h, width: 8, height: h, fill: '#109410' });
    }
  });
  var values = bars.map(function (b) { return +b.slice(1); });
  line(svg, '#f2c014', average(values, 5));
  line(svg, '#d126d6', average(values, 10));
  line(svg, '#149114', average(values, 20));
}

drawKline();
drawMacd();
drawVolume();
```
